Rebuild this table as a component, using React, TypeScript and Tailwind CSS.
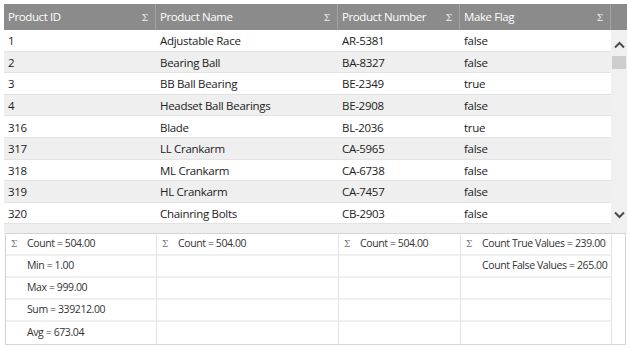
import React from "react";

const rows = [
  ["1", "Adjustable Race", "AR-5381", "false"],
  ["2", "Bearing Ball", "BA-8327", "false"],
  ["3", "BB Ball Bearing", "BE-2349", "true"],
  ["4", "Headset Ball Bearings", "BE-2908", "false"],
  ["316", "Blade", "BL-2036", "true"],
  ["317", "LL Crankarm", "CA-5965", "false"],
  ["318", "ML Crankarm", "CA-6738", "false"],
  ["319", "HL Crankarm", "CA-7457", "false"],
  ["320", "Chainring Bolts", "CB-2903", "false"],
];

const widths = ["w-[152px]", "w-[182px]", "w-[122px]", "w-[151px]"];
const headers = ["Product ID", "Product Name", "Product Number", "Make Flag"];

const footer: string[][] = [
  ["Count = 504.00", "Min = 1.00", "Max = 999.00", "Sum = 339212.00", "Avg = 673.04"],
  ["Count = 504.00"],
  ["Count = 504.00"],
  ["Count True Values = 239.00", "Count False Values = 265.00"],
];

function Sigma({ className }: { className?: string }) {
  return (
    <span className={"font-['DejaVu_Serif',serif] text-[9px] leading-none tracking-normal " + (className ?? "")}>Σ</span>
  );
}

function Chevron({ up }: { up?: boolean }) {
  return (
    <svg width="11" height="8" viewBox="0 0 11 8" className="block">
      <path
        d={up ? "M1 6.5 L5.5 2 L10 6.5" : "M1 1.5 L5.5 6 L10 1.5"}
        fill="none"
        stroke="#4a4a4a"
        strokeWidth="2"
      />
    </svg>
  );
}

export default function App() {
  return (
    <div className="w-[630px] h-[350px] bg-white pt-[4px] pl-[4px] font-['Open_Sans',sans-serif] text-[#222]">
      <div className="w-[623px]">
        {/* header */}
        <div className="flex h-[26px] bg-[#8b8b8b] text-white text-[11.5px] tracking-[-0.4px]">
          {headers.map((h, i) => (
            <div
              key={h}
              className={`${widths[i]} flex items-center justify-between pl-[4px] pr-[7px] border-r border-[#a3a3a3]`}
            >
              <span>{h}</span>
              <Sigma className="text-[#eeeeee] mt-[3px]" />
            </div>
          ))}
          <div className="flex-1" />
        </div>
        {/* body */}
        <div className="flex h-[203px]">
          <div className="w-[607px] overflow-hidden">
            {rows.map((r, ri) => (
              <div
                key={ri}
                className={`flex h-[21.6px] items-center border-b border-[#e3e3e3] text-[11.5px] tracking-[-0.3px] ${
                  ri % 2 === 1 ? "bg-[#efefef]" : "bg-white"
                }`}
              >
                {r.map((c, ci) => (
                  <div key={ci} className={`${widths[ci]} pl-[4px] pt-[1px]`}>
                    {c}
                  </div>
                ))}
              </div>
            ))}
            <div className="h-[20px] bg-[#efefef]" />
          </div>
          <div className="w-[16px] bg-[#f0f0f0] flex flex-col items-center">
            <div className="mt-[11px]">
              <Chevron up />
            </div>
            <div className="mt-[7px] w-[14px] h-[13px] bg-[#cdcdcd]" />
            <div className="flex-1" />
            <div className="mb-[14px]">
              <Chevron />
            </div>
          </div>
        </div>
        {/* footer */}
        <div className="ml-[1px] w-[621px] h-[112px] border border-[#d4d4d4] flex text-[10.5px] tracking-[-0.4px] text-[#333]">
          {footer.map((col, ci) => (
            <div
              key={ci}
              className={`${ci === 0 ? "w-[151px]" : widths[ci]} border-r border-[#e3e3e3] flex flex-col`}
            >
              {[0, 1, 2, 3, 4].map((ri) => (
                <div
                  key={ri}
                  className={`h-[22px] flex items-center whitespace-nowrap ${ri < 4 ? "border-b-2 border-[#efefef]" : ""}`}
                >
                  <span className="w-[21px] shrink-0 pl-[5px] text-[#777]">{ri === 0 ? <Sigma /> : null}</span>
                  <span>{col[ri] ?? ""}</span>
                </div>
              ))}
            </div>
          ))}
          <div className="flex-1" />
        </div>
      </div>
    </div>
  );
}
